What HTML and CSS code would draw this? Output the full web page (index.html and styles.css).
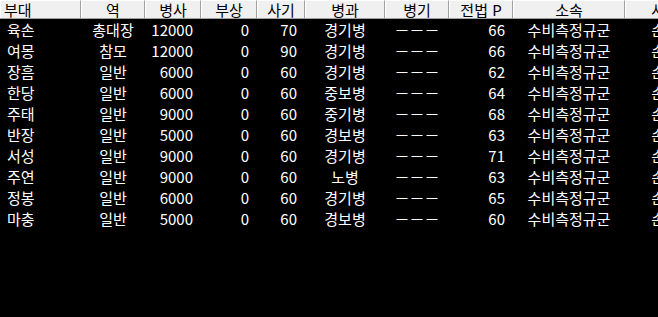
FILE: index.html
```html
<!DOCTYPE html>
<html lang="ko">
<head>
<meta charset="utf-8">
<link rel="stylesheet" href="styles.css">
</head>
<body>
<div class="grid">
  <div class="row head">
    <div class="c l">부대</div><div class="c">역</div><div class="c">병사</div><div class="c">부상</div><div class="c">사기</div><div class="c">병과</div><div class="c">병기</div><div class="c">전법 P</div><div class="c">소속</div><div class="c">사령</div>
  </div>
  <div class="row"><div class="c l">육손</div><div class="c">총대장</div><div class="c r">12000</div><div class="c r">0</div><div class="c r">70</div><div class="c">경기병</div><div class="c">－－－</div><div class="c r">66</div><div class="c">수비측정규군</div><div class="c">손권</div></div>
  <div class="row"><div class="c l">여몽</div><div class="c">참모</div><div class="c r">12000</div><div class="c r">0</div><div class="c r">90</div><div class="c">경기병</div><div class="c">－－－</div><div class="c r">66</div><div class="c">수비측정규군</div><div class="c">손권</div></div>
  <div class="row"><div class="c l">장흠</div><div class="c">일반</div><div class="c r">6000</div><div class="c r">0</div><div class="c r">60</div><div class="c">경기병</div><div class="c">－－－</div><div class="c r">62</div><div class="c">수비측정규군</div><div class="c">손권</div></div>
  <div class="row"><div class="c l">한당</div><div class="c">일반</div><div class="c r">6000</div><div class="c r">0</div><div class="c r">60</div><div class="c">중보병</div><div class="c">－－－</div><div class="c r">64</div><div class="c">수비측정규군</div><div class="c">손권</div></div>
  <div class="row"><div class="c l">주태</div><div class="c">일반</div><div class="c r">9000</div><div class="c r">0</div><div class="c r">60</div><div class="c">중기병</div><div class="c">－－－</div><div class="c r">68</div><div class="c">수비측정규군</div><div class="c">손권</div></div>
  <div class="row"><div class="c l">반장</div><div class="c">일반</div><div class="c r">5000</div><div class="c r">0</div><div class="c r">60</div><div class="c">경보병</div><div class="c">－－－</div><div class="c r">63</div><div class="c">수비측정규군</div><div class="c">손권</div></div>
  <div class="row"><div class="c l">서성</div><div class="c">일반</div><div class="c r">9000</div><div class="c r">0</div><div class="c r">60</div><div class="c">경기병</div><div class="c">－－－</div><div class="c r">71</div><div class="c">수비측정규군</div><div class="c">손권</div></div>
  <div class="row"><div class="c l">주연</div><div class="c">일반</div><div class="c r">9000</div><div class="c r">0</div><div class="c r">60</div><div class="c">노병</div><div class="c">－－－</div><div class="c r">63</div><div class="c">수비측정규군</div><div class="c">손권</div></div>
  <div class="row"><div class="c l">정봉</div><div class="c">일반</div><div class="c r">6000</div><div class="c r">0</div><div class="c r">60</div><div class="c">경기병</div><div class="c">－－－</div><div class="c r">65</div><div class="c">수비측정규군</div><div class="c">손권</div></div>
  <div class="row"><div class="c l">마충</div><div class="c">일반</div><div class="c r">5000</div><div class="c r">0</div><div class="c r">60</div><div class="c">경보병</div><div class="c">－－－</div><div class="c r">60</div><div class="c">수비측정규군</div><div class="c">손권</div></div>
</div>
</body>
</html>
```

FILE: styles.css
```css
html, body {
  margin: 0;
  padding: 0;
  background: #000;
  width: 658px;
  height: 317px;
  overflow: hidden;
}
.grid {
  font-family: "Noto Sans CJK KR", "Liberation Sans", sans-serif;
  font-size: 15px;
  color: #fff;
  width: 705px;
}
.row {
  display: grid;
  grid-template-columns: 81px 64px 56px 56px 48px 80px 64px 64px 112px 80px;
  height: 21px;
  align-items: center;
}
.c {
  text-align: center;
  white-space: nowrap;
  line-height: 21px;
}
.l { text-align: left; padding-left: 7px; }
.r { text-align: right; padding-right: 8px; }
.head {
  height: 19px;
  background: #f0f0f0;
  color: #000;
  border-bottom: 1px solid #a0a0a0;
  box-sizing: border-box;
  align-items: stretch;
}
.head .c {
  line-height: 17px;
  border-left: 1px solid #fff;
  border-right: 1px solid #a0a0a0;
  border-top: 1px solid #fff;
  box-sizing: border-box;
}
.head .l { padding-left: 3px; }
```
